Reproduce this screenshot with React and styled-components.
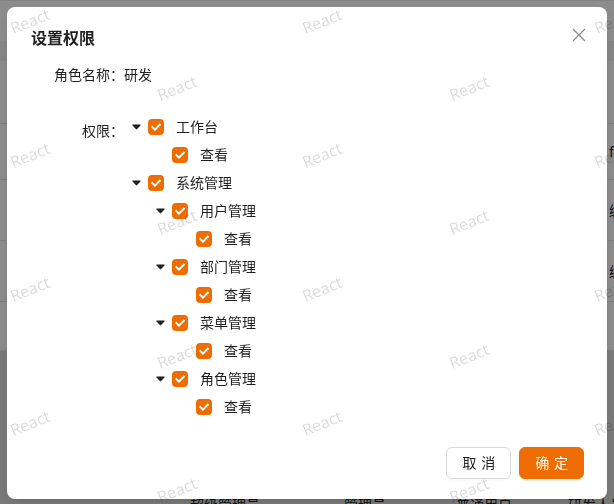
import React from 'react';
import styled, { createGlobalStyle } from 'styled-components';

const ORANGE = '#ef6c00';
const FONT = `-apple-system, "Segoe UI", Roboto, "Noto Sans CJK SC", "Noto Sans", sans-serif`;

const GlobalStyle = createGlobalStyle`
  html, body {
    margin: 0;
    padding: 0;
    width: 614px;
    height: 504px;
    overflow: hidden;
    font-family: ${FONT};
    background: #fff;
  }
`;

/* ---------- page behind the mask ---------- */

const Page = styled.div`
  width: 614px;
  height: 504px;
  display: flex;
  flex-direction: column;
  background: #fff;
`;

const TopBar = styled.div`
  height: 7px;
  display: flex;
  align-items: flex-end;
  overflow: hidden;
  padding-left: 141px;
  border-bottom: 1px solid #ececec;
`;

const BarBtn = styled.div`
  flex: none;
  height: 32px;
  width: ${({ w }) => w}px;
  margin-left: ${({ ml }) => ml}px;
  border-radius: 6px;
  box-sizing: border-box;
  background: ${({ primary }) => (primary ? ORANGE : '#fff')};
  border: 1px solid ${({ primary }) => (primary ? ORANGE : '#d9d9d9')};
`;

const Table = styled.div`
  margin-top: 40px;
  display: flex;
  flex-direction: column;
  flex: 1;
`;

const HeadRow = styled.div`
  height: 20px;
  background: #f4f4f4;
`;

const Row = styled.div`
  height: ${({ h }) => h}px;
  border-bottom: 1px solid #e6e6e6;
  display: grid;
  grid-template-columns: 609px 1fr;
  align-items: center;
  overflow: hidden;
`;

const Cell = styled.span`
  font-size: 14px;
  color: #1f1f1f;
  white-space: nowrap;
  overflow: hidden;
`;

const Footer = styled.div`
  flex: 1;
  background: #dedede;
  padding: 143px 0 0 190px;
  font-size: 14px;
  color: #222;
  white-space: nowrap;
  overflow: hidden;
`;

/* ---------- mask + modal ---------- */

const Mask = styled.div`
  position: fixed;
  inset: 0;
  background: rgba(0, 0, 0, 0.45);
  display: flex;
  justify-content: center;
  align-items: flex-start;
  padding-top: 7px;
`;

const Modal = styled.div`
  position: relative;
  width: 600px;
  box-sizing: border-box;
  background: #fff;
  border-radius: 8px;
  padding: 20px 23px 20px 24px;
  box-shadow: 0 6px 16px rgba(0, 0, 0, 0.08), 0 3px 6px -4px rgba(0, 0, 0, 0.12);
`;

const Title = styled.div`
  font-size: 16px;
  line-height: 24px;
  font-weight: 600;
  color: rgba(0, 0, 0, 0.88);
  margin-bottom: 8px;
`;

const Close = styled.button`
  position: absolute;
  top: 17px;
  right: 17px;
  width: 22px;
  height: 22px;
  padding: 0;
  border: 0;
  background: transparent;
  display: flex;
  align-items: center;
  justify-content: center;
  color: rgba(0, 0, 0, 0.45);
  cursor: pointer;
`;

const FormItem = styled.div`
  display: grid;
  grid-template-columns: 93px 1fr;
  margin-bottom: 24px;
`;

const Label = styled.div`
  height: 32px;
  line-height: 32px;
  text-align: right;
  font-size: 14px;
  color: rgba(0, 0, 0, 0.88);
  white-space: nowrap;
`;

const Value = styled.div`
  line-height: 32px;
  font-size: 14px;
  color: rgba(0, 0, 0, 0.88);
`;

const TreeList = styled.div`
  display: flex;
  flex-direction: column;
`;

const Node = styled.div`
  display: flex;
  align-items: center;
  height: 24px;
  padding-bottom: 4px;
  padding-left: ${({ level }) => level * 24}px;
`;

const Switcher = styled.span`
  flex: none;
  width: 24px;
  height: 24px;
  display: flex;
  align-items: center;
  justify-content: center;
  color: rgba(0, 0, 0, 0.88);
`;

const Box = styled.span`
  flex: none;
  width: 16px;
  height: 16px;
  border-radius: 4px;
  background: ${ORANGE};
  display: flex;
  align-items: center;
  justify-content: center;
  margin-right: 8px;
`;

const NodeTitle = styled.span`
  padding: 0 4px;
  font-size: 14px;
  line-height: 24px;
  color: rgba(0, 0, 0, 0.88);
`;

const ModalFooter = styled.div`
  display: flex;
  justify-content: flex-end;
  gap: 8px;
`;

const Btn = styled.button`
  height: 32px;
  padding: 4px 15px;
  border-radius: 6px;
  font-family: ${FONT};
  font-size: 14px;
  line-height: 22px;
  white-space: nowrap;
  display: inline-flex;
  align-items: center;
  justify-content: center;
  box-sizing: border-box;
  cursor: pointer;
  border: 1px solid ${({ primary }) => (primary ? ORANGE : '#d9d9d9')};
  background: ${({ primary }) => (primary ? ORANGE : '#fff')};
  color: ${({ primary }) => (primary ? '#fff' : 'rgba(0, 0, 0, 0.88)')};
  box-shadow: ${({ primary }) => (primary ? '0 2px 0 rgba(255, 120, 5, 0.1)' : '0 2px 0 rgba(0, 0, 0, 0.02)')};

  span {
    letter-spacing: 0.34em;
    margin-right: -0.34em;
  }
`;

/* ---------- watermark ---------- */

const Watermark = styled.div`
  position: fixed;
  inset: 0;
  pointer-events: none;
  overflow: hidden;
  z-index: 10;
`;

const Mark = styled.span`
  position: absolute;
  transform: translate(-50%, -50%) rotate(-22deg);
  font-family: "Open Sans", "Noto Sans", sans-serif;
  font-size: 16px;
  color: rgba(0, 0, 0, 0.15);
  white-space: nowrap;
`;

const treeData = [
  { title: '工作台', children: [{ title: '查看' }] },
  {
    title: '系统管理',
    children: [
      { title: '用户管理', children: [{ title: '查看' }] },
      { title: '部门管理', children: [{ title: '查看' }] },
      { title: '菜单管理', children: [{ title: '查看' }] },
      { title: '角色管理', children: [{ title: '查看' }] },
    ],
  },
];

const flatten = (nodes, level = 0) => nodes.reduce((agg, node) => {
  agg.push({ ...node, level });
  if (node.children) agg.push(...flatten(node.children, level + 1));
  return agg;
}, []);

// staggered watermark grid, same as the page's watermark layer
const marks = [];
for (let r = 0; r < 8; r += 1) {
  for (let k = -1; k < 3; k += 1) {
    marks.push({ x: (r % 2 ? 177 : 30) + 292 * k, y: 21 + 67 * r });
  }
}

const Caret = () => (
  <svg width="9" height="6" viewBox="0 0 9 6">
    <path d="M0.9 0.6h7.2c0.5 0 0.7 0.5 0.4 0.9L4.8 5.2c-0.2 0.3-0.5 0.3-0.7 0L0.5 1.5c-0.3-0.4-0.1-0.9 0.4-0.9z" fill="currentColor" />
  </svg>
);

const Check = () => (
  <svg width="16" height="16" viewBox="0 0 16 16">
    <path d="M4.3 8.1l2.6 2.6 4.9-5" fill="none" stroke="#fff" strokeWidth="2" strokeLinecap="square" />
  </svg>
);

const App = () => {
  const rows = flatten(treeData);

  return (
    <>
      <GlobalStyle />
      <Page>
        <TopBar>
          <BarBtn primary w={64} ml={17} />
          <BarBtn w={62} ml={9} />
        </TopBar>
        <Table>
          <HeadRow />
          <Row h={62} />
          <Row h={55}><span /><Cell>fa</Cell></Row>
          <Row h={60}><span /><Cell>编辑</Cell></Row>
          <Row h={60}><span /><Cell>编辑</Cell></Row>
          <Row h={48} />
          <Footer>超级管理员　　　　　　管理员　　　　　普通用户　　　　研发人员</Footer>
        </Table>
      </Page>

      <Mask>
        <Modal>
          <Title>设置权限</Title>
          <Close aria-label="close">
            <svg width="14" height="14" viewBox="0 0 14 14">
              <path d="M1 1l12 12M13 1L1 13" stroke="currentColor" strokeWidth="1.3" />
            </svg>
          </Close>

          <FormItem>
            <Label>角色名称：</Label>
            <Value>研发</Value>
          </FormItem>

          <FormItem>
            <Label>权限：</Label>
            <TreeList>
              {rows.map((node, idx) => (
                // eslint-disable-next-line react/no-array-index-key
                <Node key={`node-${idx}`} level={node.level}>
                  <Switcher>{node.children ? <Caret /> : null}</Switcher>
                  <Box><Check /></Box>
                  <NodeTitle>{node.title}</NodeTitle>
                </Node>
              ))}
            </TreeList>
          </FormItem>

          <ModalFooter>
            <Btn><span>取消</span></Btn>
            <Btn primary><span>确定</span></Btn>
          </ModalFooter>
        </Modal>
      </Mask>

      <Watermark>
        {marks.map((m, idx) => (
          // eslint-disable-next-line react/no-array-index-key
          <Mark key={`mark-${idx}`} style={{ left: m.x, top: m.y }}>React</Mark>
        ))}
      </Watermark>
    </>
  );
};

export default App;
